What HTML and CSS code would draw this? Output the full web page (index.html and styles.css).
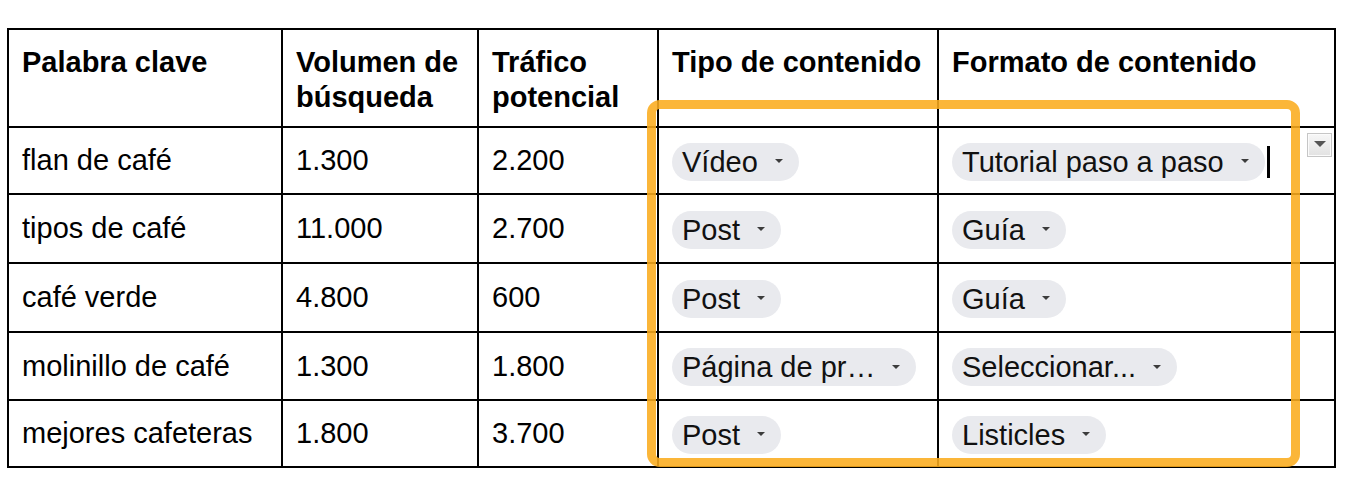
FILE: index.html
```html
<!DOCTYPE html>
<html lang="es">
<head>
<meta charset="utf-8">
<title>Palabras clave</title>
<link rel="stylesheet" href="styles.css">
</head>
<body>
<div class="page">
  <div class="sheet" role="table">
    <div class="cell head">Palabra clave</div>
    <div class="cell head">Volumen de búsqueda</div>
    <div class="cell head">Tráfico potencial</div>
    <div class="cell head">Tipo de contenido</div>
    <div class="cell head">Formato de contenido</div>

    <div class="cell">flan de café</div>
    <div class="cell">1.300</div>
    <div class="cell">2.200</div>
    <div class="cell chipcell"><span class="chip">Vídeo<i class="caret"></i></span></div>
    <div class="cell chipcell active"><span class="chip">Tutorial paso a paso<i class="caret"></i></span><span class="cursor"></span><span class="dropbtn"><i class="dtri"></i></span></div>

    <div class="cell">tipos de café</div>
    <div class="cell">11.000</div>
    <div class="cell">2.700</div>
    <div class="cell chipcell"><span class="chip">Post<i class="caret"></i></span></div>
    <div class="cell chipcell"><span class="chip">Guía<i class="caret"></i></span></div>

    <div class="cell">café verde</div>
    <div class="cell">4.800</div>
    <div class="cell">600</div>
    <div class="cell chipcell"><span class="chip">Post<i class="caret"></i></span></div>
    <div class="cell chipcell"><span class="chip">Guía<i class="caret"></i></span></div>

    <div class="cell">molinillo de café</div>
    <div class="cell">1.300</div>
    <div class="cell">1.800</div>
    <div class="cell chipcell"><span class="chip">Página de pr…<i class="caret"></i></span></div>
    <div class="cell chipcell"><span class="chip">Seleccionar...<i class="caret"></i></span></div>

    <div class="cell">mejores cafeteras</div>
    <div class="cell">1.800</div>
    <div class="cell">3.700</div>
    <div class="cell chipcell"><span class="chip">Post<i class="caret"></i></span></div>
    <div class="cell chipcell"><span class="chip">Listicles<i class="caret"></i></span></div>

    <div class="highlight"></div>
  </div>
</div>
</body>
</html>
```

FILE: styles.css
```css
html, body {
  margin: 0;
  padding: 0;
  background: #ffffff;
}

.page {
  padding: 28px 0 0 7px;
  font-family: "Liberation Sans", Arial, sans-serif;
  font-size: 29px;
  color: #000;
}

.sheet {
  position: relative;
  display: grid;
  grid-template-columns: 274px 196px 180px 280px 397px;
  grid-template-rows: 98px 67px 69px 69px 68px 67px;
  width: 1329px;
  box-sizing: border-box;
  border-left: 2px solid #000;
  border-top: 2px solid #000;
}

.cell {
  position: relative;
  box-sizing: border-box;
  border-right: 2px solid #000;
  border-bottom: 2px solid #000;
  padding: 0 6px 0 13px;
  display: flex;
  align-items: center;
  line-height: 35px;
  white-space: nowrap;
}

.cell.head {
  align-items: flex-start;
  padding-top: 15px;
  font-weight: bold;
  white-space: normal;
}

.chipcell {
  padding-top: 2px;
}

.chip {
  display: inline-flex;
  align-items: center;
  height: 38px;
  line-height: 38px;
  padding: 0 16px 0 10px;
  border-radius: 19px;
  background: #e9eaee;
  color: #111;
}

.caret {
  display: inline-block;
  width: 0;
  height: 0;
  margin-left: 17px;
  margin-top: -1px;
  border-left: 4px solid transparent;
  border-right: 4px solid transparent;
  border-top: 4px solid #3c3c3c;
}

.cursor {
  display: inline-block;
  width: 3px;
  height: 32px;
  margin-left: 2px;
  background: #000;
}

.dropbtn {
  position: absolute;
  top: 5px;
  right: 2px;
  width: 25px;
  height: 24px;
  box-sizing: border-box;
  border: 1px solid #c6c6c6;
  background: linear-gradient(#f7f7f7, #e2e2e2);
  box-shadow: inset 0 0 0 1px #fbfbfb;
  display: flex;
  align-items: center;
  justify-content: center;
}

.dtri {
  display: block;
  width: 0;
  height: 0;
  margin-top: -2px;
  border-left: 6px solid transparent;
  border-right: 6px solid transparent;
  border-top: 6px solid #555;
}

.highlight {
  position: absolute;
  left: 638px;
  top: 70px;
  width: 653px;
  height: 367px;
  box-sizing: border-box;
  border: 9px solid rgba(251, 172, 30, 0.88);
  border-radius: 13px;
  pointer-events: none;
}
```
